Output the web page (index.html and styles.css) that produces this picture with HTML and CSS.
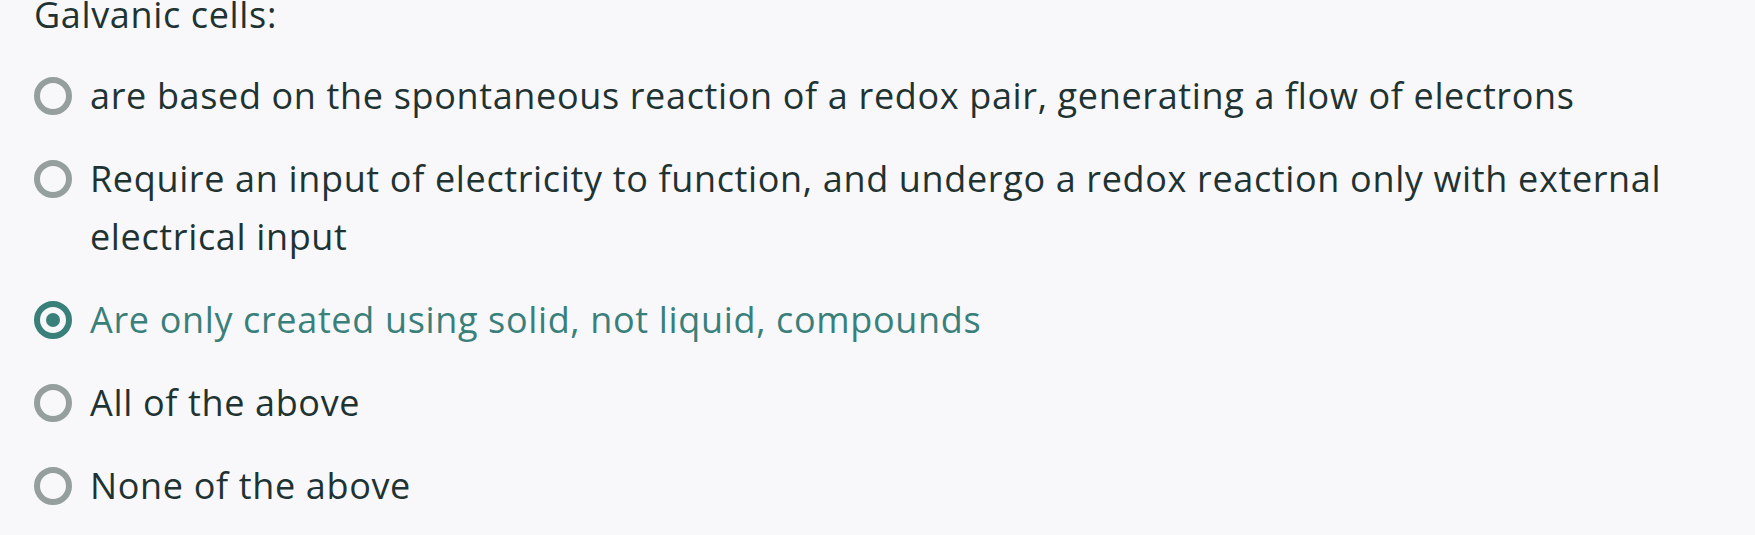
FILE: index.html
```html
<!DOCTYPE html>
<html>
<head>
<meta charset="utf-8">
<link rel="stylesheet" href="styles.css">
</head>
<body>
<div class="question">
  <div class="prompt">Galvanic cells:</div>
  <div class="options">
    <label class="option"><span class="radio"></span><span class="text">are based on the spontaneous reaction of a redox pair, generating a flow of electrons</span></label>
    <label class="option"><span class="radio"></span><span class="text">Require an input of electricity to function, and undergo a redox reaction only with external electrical input</span></label>
    <label class="option selected"><span class="radio"></span><span class="text">Are only created using solid, not liquid, compounds</span></label>
    <label class="option"><span class="radio"></span><span class="text">All of the above</span></label>
    <label class="option"><span class="radio"></span><span class="text">None of the above</span></label>
  </div>
</div>
</body>
</html>
```
FILE: styles.css
```css
html, body {
  margin: 0;
  padding: 0;
  background: #f8f8fa;
}
body {
  font-family: "Open Sans", "Lato", sans-serif;
  font-variant-ligatures: none;
  letter-spacing: 0.65px;
  color: #1e3332;
}
.question {
  padding-left: 34px;
  width: 1670px;
}
.prompt {
  font-size: 36px;
  line-height: 36px;
  margin-top: -3px;
}
.options {
  display: flex;
  flex-direction: column;
  gap: 25px;
  margin-top: 34px;
}
.option {
  display: flex;
  align-items: flex-start;
  gap: 18px;
  font-size: 36px;
  line-height: 58px;
}
.radio {
  flex: none;
  box-sizing: border-box;
  width: 38px;
  height: 38px;
  margin-top: 10px;
  border: 6px solid #959f9d;
  border-radius: 50%;
  display: flex;
  align-items: center;
  justify-content: center;
}
.option.selected {
  color: #3a807a;
}
.option.selected .radio {
  border-color: #3a807a;
}
.option.selected .radio::after {
  content: "";
  width: 14px;
  height: 14px;
  border-radius: 50%;
  background: #3a807a;
}
```
